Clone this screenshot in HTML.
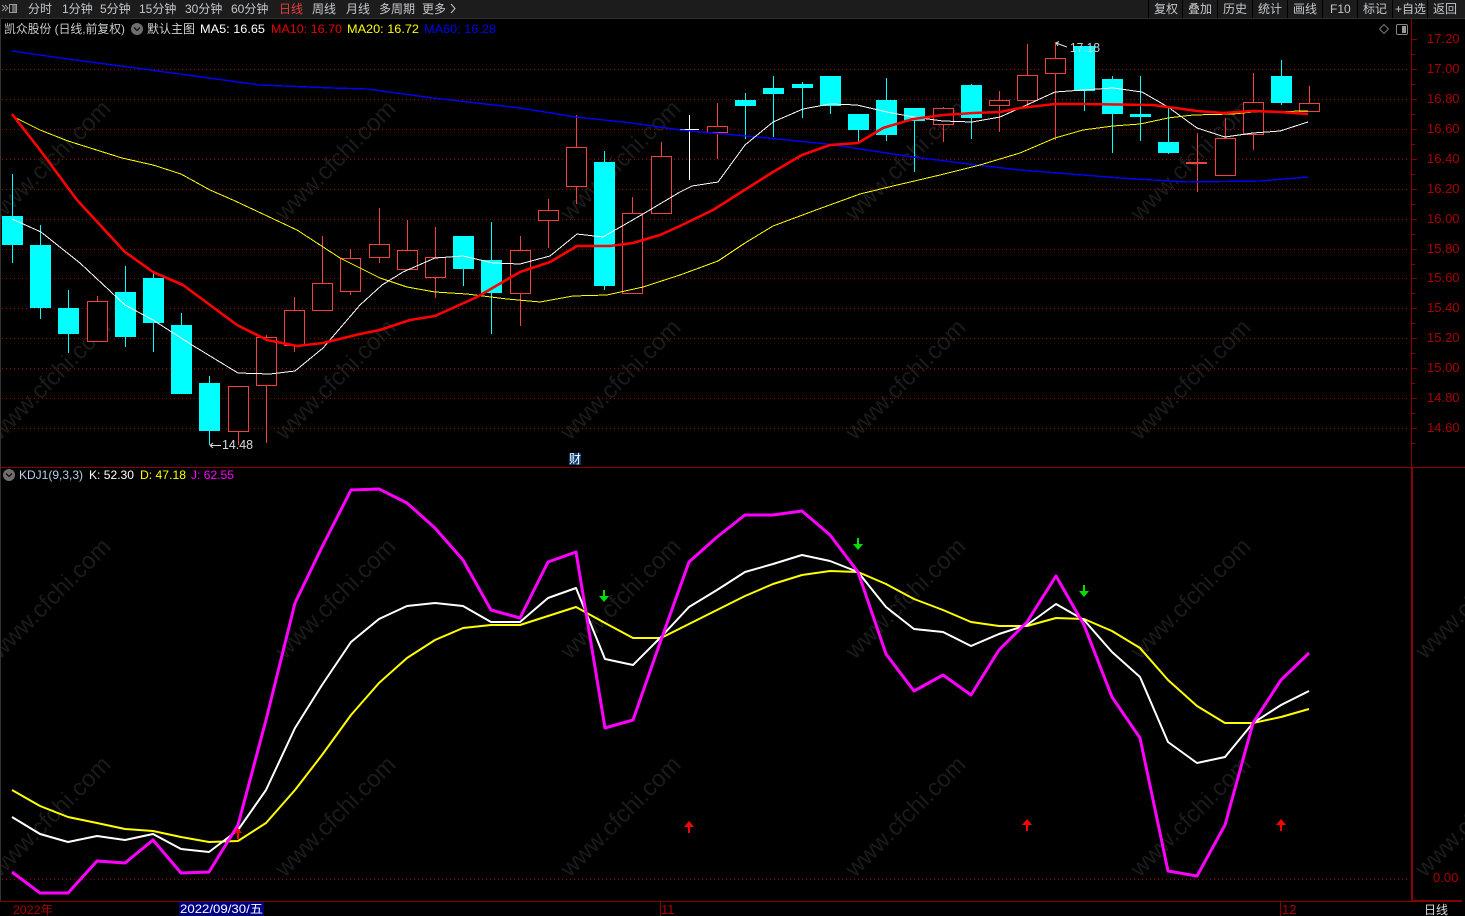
<!DOCTYPE html>
<html lang="zh"><head><meta charset="utf-8"><title>K线图</title>
<style>
html,body{margin:0;padding:0;background:#000;width:1465px;height:916px;overflow:hidden}
svg{display:block;position:absolute;left:0;top:0}
text{font-family:"Liberation Sans","Noto Sans CJK SC",sans-serif;font-size:12px}
.t text{fill:#c4c8cc}
.ax text{fill:#a80000;font-size:13px}
.wm text{fill:#1b1b1b;font-size:24px;text-anchor:middle}
.c{shape-rendering:crispEdges}
polyline{fill:none;stroke-linejoin:round}
</style></head><body>
<svg width="1465" height="916" viewBox="0 0 1465 916" xmlns="http://www.w3.org/2000/svg">
<rect width="1465" height="916" fill="#000"/>
<!-- watermarks -->
<g class="wm">
<text transform="translate(56 166) rotate(-45)">www.cfchi.com</text><text transform="translate(341 166) rotate(-45)">www.cfchi.com</text><text transform="translate(626 166) rotate(-45)">www.cfchi.com</text><text transform="translate(911 166) rotate(-45)">www.cfchi.com</text><text transform="translate(1196 166) rotate(-45)">www.cfchi.com</text>
<text transform="translate(56 385) rotate(-45)">www.cfchi.com</text><text transform="translate(341 385) rotate(-45)">www.cfchi.com</text><text transform="translate(626 385) rotate(-45)">www.cfchi.com</text><text transform="translate(911 385) rotate(-45)">www.cfchi.com</text><text transform="translate(1196 385) rotate(-45)">www.cfchi.com</text>
<text transform="translate(56 604) rotate(-45)">www.cfchi.com</text><text transform="translate(341 604) rotate(-45)">www.cfchi.com</text><text transform="translate(626 604) rotate(-45)">www.cfchi.com</text><text transform="translate(911 604) rotate(-45)">www.cfchi.com</text><text transform="translate(1196 604) rotate(-45)">www.cfchi.com</text><text transform="translate(1481 604) rotate(-45)">www.cfchi.com</text>
<text transform="translate(56 822) rotate(-45)">www.cfchi.com</text><text transform="translate(341 822) rotate(-45)">www.cfchi.com</text><text transform="translate(626 822) rotate(-45)">www.cfchi.com</text><text transform="translate(911 822) rotate(-45)">www.cfchi.com</text><text transform="translate(1196 822) rotate(-45)">www.cfchi.com</text><text transform="translate(1481 822) rotate(-45)">www.cfchi.com</text>
</g>
<!-- grid -->
<path class="c" d="M2 69.5H1407M2 99.5H1407M2 129.5H1407M2 159.5H1407M2 189.5H1407M2 219.5H1407M2 249.5H1407M2 278.5H1407M2 308.5H1407M2 338.5H1407M2 368.5H1407M2 398.5H1407M2 428.5H1407M2 879.5H1407" stroke="#900000" stroke-width="1" stroke-dasharray="1 3" fill="none"/>
<!-- cyan wicks -->
<path class="c" fill="none" stroke="#00ffff" d="M12.5 174V263M40.5 225V319M68.5 290V353M125.5 266V347M153.5 271V352M181.5 313V394M209.5 376V445M463.5 236V286M491.5 222V334M604.5 151V290M745.5 93V139M773.5 76V137M802.5 82V118M830.5 76V114M858.5 114V142M886.5 78V141M914.5 108V172M971.5 84V139M1084.5 46V111M1112.5 76V153M1140.5 76V141M1168.5 108V154M1281.5 60V105"/>
<!-- cyan bodies -->
<path class="c" fill="#00ffff" d="M2 216h21v29h-21zM30 245h21v63h-21zM58 308h21v26h-21zM115 292h21v45h-21zM143 278h21v45h-21zM171 325h21v69h-21zM199 383h21v48h-21zM453 236h21v33h-21zM481 260h21v33h-21zM594 162h21v124h-21zM735 100h21v6h-21zM763 88h21v6h-21zM792 84h21v4h-21zM820 76h21v30h-21zM848 114h21v16h-21zM876 100h21v35h-21zM904 108h21v13h-21zM961 85h21v33h-21zM1074 46h21v45h-21zM1102 79h21v35h-21zM1130 114h21v3h-21zM1158 142h21v11h-21zM1271 76h21v27h-21z"/>
<!-- red wicks -->
<path class="c" fill="none" stroke="#f04040" d="M97.5 296V341M238.5 386V445M266.5 335V443M294.5 297V352M322.5 236V310M350.5 249V295M379.5 208V263M407.5 220V269M435.5 227V298M520.5 236V326M548.5 199V248M576.5 115V204M632.5 197V293M661.5 142V213M717.5 103V159M943.5 107V142M999.5 91V132M1027.5 44V106M1055.5 42V140M1197.5 133V192M1225.5 118V138M1253.5 73V150M1309.5 86V103"/>
<!-- red bodies -->
<g class="c" fill="#000" stroke="#f04040">
<rect x="87.5" y="301.5" width="20" height="40"/><rect x="228.5" y="386.5" width="20" height="45"/><rect x="256.5" y="337.5" width="20" height="48"/><rect x="284.5" y="310.5" width="20" height="35"/><rect x="312.5" y="283.5" width="20" height="27"/><rect x="340.5" y="258.5" width="20" height="33"/><rect x="369.5" y="244.5" width="20" height="13"/><rect x="397.5" y="250.5" width="20" height="19"/><rect x="425.5" y="257.5" width="20" height="20"/><rect x="510.5" y="250.5" width="20" height="43"/><rect x="538.5" y="210.5" width="20" height="10"/><rect x="566.5" y="147.5" width="20" height="39"/><rect x="622.5" y="213.5" width="20" height="80"/><rect x="651.5" y="156.5" width="20" height="57"/><rect x="707.5" y="126.5" width="20" height="6"/><rect x="933.5" y="108.5" width="20" height="16"/><rect x="989.5" y="100.5" width="20" height="5"/><rect x="1017.5" y="75.5" width="20" height="25"/><rect x="1045.5" y="58.5" width="20" height="15"/><rect x="1215.5" y="138.5" width="20" height="37"/><rect x="1243.5" y="102.5" width="20" height="32"/><rect x="1299.5" y="103.5" width="20" height="8"/>
</g>
<rect class="c" x="1186" y="162" width="21" height="2" fill="#f04040"/>
<path class="c" d="M689.5 115V180M680 129.5H699" stroke="#fff" fill="none"/>
<!-- MA lines -->
<polyline class="c" stroke="#0000ff" stroke-width="1.4" points="12,51 68,59 143,69 260,85 333,88 367,89 433,98 520,108 576,117 632,123 680,130 757,137 827,144 913,157 977,165 1020,170 1120,178 1187,182 1260,181 1308,177"/>
<polyline class="c" stroke="#ffff00" stroke-width="1" points="12,116 40,130 68,141 122,158 153,165 181,174 210,190 233,200 297,230 340,258 360,268 380,278 407,287 435,292 467,294 507,299 540,302 573,296 607,295 643,287 680,275 718,261 745,243 773,226 816,210 860,194 893,186 940,175 980,165 1020,153 1055,138 1083,130 1113,126 1140,124 1168,118 1193,115 1233,114 1253,112 1308,111"/>
<polyline class="c" stroke="#ffffff" stroke-width="1" points="12,219 41,232 80,263 125,305 153,320 192,345 238,373 270,374 295,371 323,348 360,305 382,285 403,272 435,258 463,256 493,263 520,264 550,256 577,234 603,237 643,214 680,192 692,186 718,182 745,145 773,122 803,109 830,104 857,105 887,112 913,117 943,121 972,122 1000,117 1020,108 1055,92 1083,90 1113,88 1142,92 1168,107 1197,128 1225,137 1253,133 1280,131 1308,122"/>
<polyline stroke="#ff0000" stroke-width="2.6" points="12,114 40,150 77,200 125,252 153,272 183,285 237,325 267,340 297,346 323,343 360,334 380,330 410,320 435,316 477,297 520,272 550,262 577,246 610,246 633,243 660,235 680,226 713,210 773,172 802,155 830,145 858,143 883,128 913,119 943,115 973,113 1000,112 1020,108 1055,104 1083,104 1153,105 1197,111 1223,113 1253,111 1280,112 1308,114"/>
<!-- KDJ lines -->
<polyline stroke="#ffff00" stroke-width="2" points="12,790 40,806 68,817 97,823 125,829 153,831 181,837 209,842 238,841 266,823 295,790 322,755 351,715 379,683 407,658 435,640 463,628 491,625 520,625 548,616 576,607 605,623 633,638 661,638 689,624 717,610 745,596 773,584 802,575 830,571 858,572 886,584 914,599 943,610 971,622 999,626 1027,626 1056,618 1084,619 1112,631 1140,648 1168,680 1197,706 1225,723 1253,723 1281,717 1309,709"/>
<polyline stroke="#ffffff" stroke-width="2" points="12,817 40,834 68,842 97,836 125,840 153,834 181,849 209,852 238,830 266,790 295,728 322,685 351,642 379,619 407,606 435,603 463,606 491,622 520,622 548,598 576,588 605,659 633,665 661,637 689,607 717,590 745,572 773,564 802,555 830,561 858,572 886,607 914,629 943,632 971,646 999,634 1027,625 1056,604 1084,620 1112,652 1140,677 1168,742 1197,763 1225,757 1253,723 1281,705 1309,691"/>
<polyline stroke="#ff00ff" stroke-width="3" points="12,872 40,893 68,893 97,861 125,863 153,840 181,873 209,872 238,825 266,720 295,603 322,547 351,490 379,489 407,503 435,528 463,560 491,610 520,618 548,562 576,552 605,728 633,720 661,640 689,562 717,537 745,515 773,515 802,511 830,535 858,572 886,654 914,691 943,675 971,695 999,650 1027,622 1056,576 1084,625 1112,697 1140,738 1168,871 1197,876 1225,825 1253,723 1281,680 1309,653"/>
<!-- signal arrows -->
<g fill="#00e000"><path d="M857 538h2v6h4l-5 6-5-6h4z"/><path d="M603 590h2v6h4l-5 6-5-6h4z"/><path d="M1083 585h2v6h4l-5 6-5-6h4z"/></g>
<g fill="#ff0000"><path d="M689 821l5 6h-4v6h-2v-6h-4z"/><path d="M1027 819l5 6h-4v6h-2v-6h-4z"/><path d="M1281 819l5 6h-4v6h-2v-6h-4z"/><path d="M238 828l4 5h-3v6h-2v-6h-3z"/></g>
<!-- axis -->
<g class="c" fill="#8a0000">
<rect x="0" y="467" width="1465" height="1"/>
<rect x="1411" y="19" width="1" height="448"/>
<rect x="1411" y="468" width="2" height="433"/>
<rect x="1411" y="900" width="51" height="2"/>
<rect x="0" y="901" width="1411" height="1"/>
<rect x="660" y="902" width="1" height="14"/>
<rect x="1280" y="902" width="1" height="14"/>
<path d="M1412 39h5v1h-5zM1412 54h3v1h-3zM1412 69h5v1h-5zM1412 84h3v1h-3zM1412 99h5v1h-5zM1412 114h3v1h-3zM1412 129h5v1h-5zM1412 144h3v1h-3zM1412 159h5v1h-5zM1412 174h3v1h-3zM1412 189h5v1h-5zM1412 204h3v1h-3zM1412 219h5v1h-5zM1412 234h3v1h-3zM1412 249h5v1h-5zM1412 264h3v1h-3zM1412 278h5v1h-5zM1412 293h3v1h-3zM1412 308h5v1h-5zM1412 323h3v1h-3zM1412 338h5v1h-5zM1412 353h3v1h-3zM1412 368h5v1h-5zM1412 383h3v1h-3zM1412 398h5v1h-5zM1412 413h3v1h-3zM1412 428h5v1h-5zM1412 443h3v1h-3z"/>
</g>
<rect x="0" y="19" width="1" height="882" fill="#333"/>
<g class="ax">
<text x="1427" y="43">17.20</text><text x="1427" y="73">17.00</text><text x="1427" y="103">16.80</text><text x="1427" y="133">16.60</text><text x="1427" y="163">16.40</text><text x="1427" y="193">16.20</text><text x="1427" y="223">16.00</text><text x="1427" y="253">15.80</text><text x="1427" y="282">15.60</text><text x="1427" y="312">15.40</text><text x="1427" y="342">15.20</text><text x="1427" y="372">15.00</text><text x="1427" y="402">14.80</text><text x="1427" y="432">14.60</text><text x="1433" y="882">0.00</text>
</g>
<!-- toolbar -->
<rect x="0" y="0" width="1465" height="18" fill="#1c1c1c"/>
<rect x="0" y="18" width="1465" height="1" fill="#2e2e2e"/>
<path class="c" d="M1148.500 0V18M1182.500 0V18M1217.500 0V18M1252.500 0V18M1287.500 0V18M1322.500 0V18M1357.500 0V18M1392.500 0V18M1427.500 0V18" stroke="#000" fill="none"/>
<g fill="none" stroke="#9a9a9a"><path d="M2 5l3 3-3 3M5 5l3 3-3 3"/><rect x="9.500" y="4.500" width="7" height="8"/></g>
<rect x="12" y="5" width="4" height="7" fill="#666"/>
<g class="t">
<text x="28" y="13">分时</text><text x="62" y="13">1分钟</text><text x="100" y="13">5分钟</text><text x="139" y="13">15分钟</text><text x="185" y="13">30分钟</text><text x="231" y="13">60分钟</text><text x="279" y="13" style="fill:#e83c3c">日线</text><text x="312" y="13">周线</text><text x="346" y="13">月线</text><text x="379" y="13">多周期</text><text x="422" y="13">更多</text>
<path d="M451 4l4 4.500-4 4.500" fill="none" stroke="#c4c8cc"/>
<text x="1154" y="13">复权</text><text x="1188" y="13">叠加</text><text x="1223" y="13">历史</text><text x="1258" y="13">统计</text><text x="1293" y="13">画线</text><text x="1330" y="13">F10</text><text x="1363" y="13">标记</text><text x="1395" y="13">+自选</text><text x="1433" y="13">返回</text>
</g>
<!-- legend -->
<text x="4" y="33" fill="#c8ccd0" textLength="121" lengthAdjust="spacingAndGlyphs">凯众股份 (日线,前复权)</text>
<circle cx="137" cy="29" r="6" fill="#6e6e6e"/><path d="M134 27.500l3 3 3-3" fill="none" stroke="#111" stroke-width="1.300"/>
<text x="147" y="33" fill="#d0d4d8">默认主图</text>
<text x="200" y="33" fill="#ffffff" textLength="65" lengthAdjust="spacingAndGlyphs">MA5: 16.65</text>
<text x="271" y="33" fill="#e80000" textLength="71" lengthAdjust="spacingAndGlyphs">MA10: 16.70</text>
<text x="347" y="33" fill="#ffff00" textLength="72" lengthAdjust="spacingAndGlyphs">MA20: 16.72</text>
<text x="424" y="33" fill="#0000f0" textLength="72" lengthAdjust="spacingAndGlyphs">MA60: 16.28</text>
<path d="M1384 24.500l4.500 4.500-4.500 4.500-4.500-4.500z" fill="none" stroke="#777"/>
<rect x="1396.500" y="24.500" width="11" height="10" rx="1.500" fill="#000" stroke="#888"/><rect x="1402" y="26" width="4" height="7" fill="#999"/>
<!-- annotations -->
<path d="M221 445.500H210M210 445.500l3-2.500M210 445.500l3 2.500" stroke="#ddd" fill="none"/>
<path class="c" d="M209.500 431V445" stroke="#00ffff" fill="none"/>
<text x="222" y="449" fill="#d8dce0" style="font-size:13px" textLength="31" lengthAdjust="spacingAndGlyphs">14.48</text>
<path d="M1067 47L1056 43M1056 43l3-1.500M1056 43l2 3" stroke="#ddd" fill="none"/>
<text x="1070" y="52" fill="#c0d0e0" style="font-size:13px" textLength="30" lengthAdjust="spacingAndGlyphs">17.18</text>
<rect x="569" y="453" width="12" height="12" fill="#0a3a70"/>
<text x="569" y="463" fill="#fff">财</text>
<!-- KDJ legend -->
<circle cx="9" cy="475" r="6" fill="#6e6e6e"/><path d="M6 473.500l3 3 3-3" fill="none" stroke="#111" stroke-width="1.300"/>
<text x="19" y="479" fill="#b8d0e8" textLength="64" lengthAdjust="spacingAndGlyphs">KDJ1(9,3,3)</text>
<text x="89" y="479" fill="#ffffff" textLength="45" lengthAdjust="spacingAndGlyphs">K: 52.30</text>
<text x="140" y="479" fill="#ffff00" textLength="46" lengthAdjust="spacingAndGlyphs">D: 47.18</text>
<text x="191" y="479" fill="#ff00ff" textLength="43" lengthAdjust="spacingAndGlyphs">J: 62.55</text>
<!-- bottom axis -->
<text x="13" y="914" fill="#a80000" textLength="40" lengthAdjust="spacingAndGlyphs">2022年</text>
<rect x="179" y="902" width="85" height="14" fill="#000080"/>
<text x="180" y="913" fill="#ffffff" textLength="83" lengthAdjust="spacingAndGlyphs">2022/09/30/五</text>
<text x="661" y="914" fill="#a80000" style="font-size:13px">11</text>
<text x="1282" y="914" fill="#a80000" style="font-size:13px">12</text>
<text x="1424" y="914" fill="#d8dce0">日线</text>
</svg>
</body></html>
